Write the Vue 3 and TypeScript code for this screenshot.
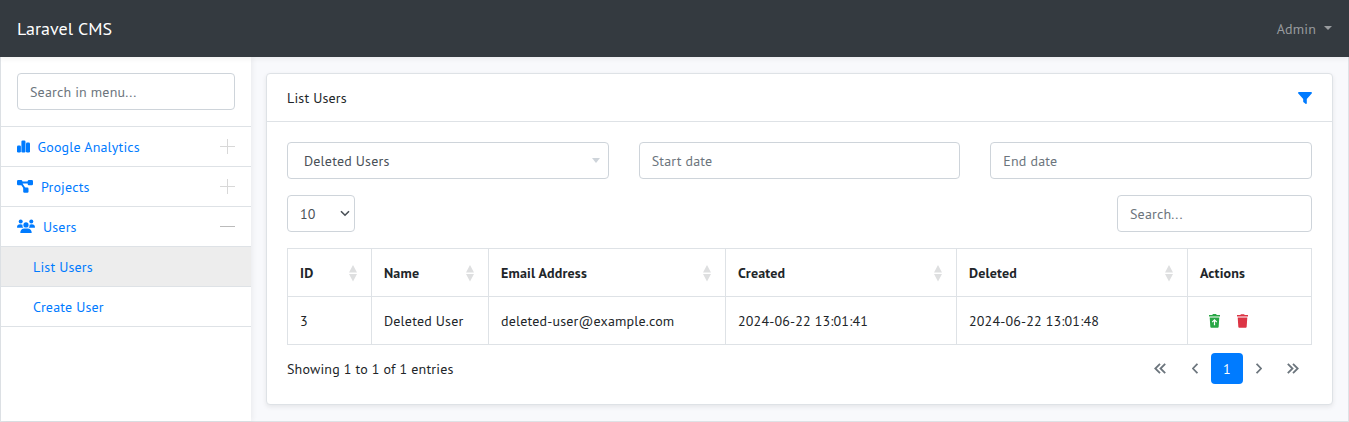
<script setup lang="ts">
import { ref } from 'vue'

interface Column {
  key: string
  label: string
  value: string
}

const columns: Column[] = [
  { key: 'id', label: 'ID', value: '3' },
  { key: 'name', label: 'Name', value: 'Deleted User' },
  { key: 'email', label: 'Email Address', value: 'deleted-user@example.com' },
  { key: 'created', label: 'Created', value: '2024-06-22 13:01:41' },
  { key: 'deleted', label: 'Deleted', value: '2024-06-22 13:01:48' },
]
const pageSize = ref('10')
</script>

<template>
  <div class="app">
    <header class="navbar">
      <span class="brand">Laravel CMS</span>
      <span class="account"><span>Admin</span><i class="caret"></i></span>
    </header>
    <div class="shell">
      <aside class="sidebar">
        <div class="menu-search">
          <input class="control" type="text" placeholder="Search in menu..." />
        </div>
        <nav>
          <a class="item analytics">
            <svg width="13" height="13" viewBox="0 0 13 13"><rect x="0" y="5.500" width="3.900" height="7" rx="1.200" /><rect x="4.400" y=".5" width="4.100" height="12" rx="1.200" /><rect x="9" y="2.500" width="4" height="10" rx="1.200" /></svg>
            <span>Google Analytics</span><i class="toggle plus"></i>
          </a>
          <a class="item">
            <svg width="16" height="13" viewBox="0 0 16 13"><rect x="0" y="0" width="5.300" height="5.200" rx="1.200" /><rect x="10.700" y="0" width="5.300" height="5.200" rx="1.200" /><rect x="6.200" y="7.600" width="5.300" height="5.200" rx="1.200" /><path d="M4 2.500h8M4 3l4 6" fill="none" stroke="#007bff" stroke-width="1.900" /></svg>
            <span>Projects</span><i class="toggle plus"></i>
          </a>
          <a class="item">
            <svg width="18" height="15" viewBox="0 0 18 15"><circle cx="3.700" cy="2.500" r="2" /><circle cx="14.300" cy="2.500" r="2" /><circle cx="9" cy="5.900" r="2.600" /><path d="M0 8.400C0 6 1.200 5.200 3.300 5.200c1 0 1.700.2 2.200.5-.2 1.600.2 2.500 1 3.100H.4zM18 8.400c0-2.400-1.200-3.200-3.300-3.200-1 0-1.700.2-2.200.5.2 1.600-.2 2.500-1 3.100h6.100zM3.300 14c0-3 1.500-4.600 4-4.600h3.400c2.500 0 4 1.600 4 4.600z" /></svg>
            <span>Users</span><i class="toggle"></i>
          </a>
          <a class="item sub active">List Users</a>
          <a class="item sub">Create User</a>
        </nav>
      </aside>
      <main class="content">
        <section class="card">
          <div class="card-header">
            <span>List Users</span>
            <svg class="filter" width="14" height="12" viewBox="0 0 14 12"><path d="M1 0h12c.9 0 1.300.9.7 1.600L8.800 7v4.200c0 .7-.7 1-1.300.6L5.600 10.300c-.3-.2-.4-.4-.4-.8V7L.3 1.600C-.3.9.1 0 1 0z" /></svg>
          </div>
          <div class="card-body">
            <div class="filters">
              <div class="control combo"><span>Deleted Users</span><i class="combo-arrow"></i></div>
              <input class="control" type="text" placeholder="Start date" />
              <input class="control" type="text" placeholder="End date" />
            </div>
            <div class="tools">
              <div class="control length"><span>{{ pageSize }}</span><svg width="10" height="7" viewBox="0 0 10 7"><path d="M1 1.200l4 4 4-4" fill="none" stroke="#495057" stroke-width="1.600" /></svg></div>
              <input class="control table-search" type="text" placeholder="Search..." />
            </div>
            <table>
              <colgroup><col class="w-id" /><col class="w-name" /><col class="w-email" /><col class="w-date" /><col class="w-date" /><col class="w-actions" /></colgroup>
              <thead>
                <tr>
                  <th v-for="c in columns" :key="c.key">
                    <div class="head-cell"><span>{{ c.label }}</span><svg width="8" height="17" viewBox="0 0 8 17"><path d="M0 7.500L4 0l4 7.500zM0 9h8l-4 7.500z" fill="#dedfe0" /></svg></div>
                  </th>
                  <th>Actions</th>
                </tr>
              </thead>
              <tbody>
                <tr>
                  <td v-for="c in columns" :key="c.key">{{ c.value }}</td>
                  <td>
                    <div class="actions">
                      <svg width="11" height="14" viewBox="0 0 11 14"><path d="M0 1h3.200L4 0h3l.8 1H11v1.600H0zM.7 3.500h9.600L9.700 12.500c0 .8-.5 1.300-1.300 1.300H2.600c-.8 0-1.300-.5-1.300-1.300z" fill="#28a745" /><path d="M5.500 11.300V6.200M3.200 8.200l2.300-2.300 2.300 2.300" stroke="#fff" stroke-width="1.200" fill="none" /></svg>
                      <svg width="11" height="14" viewBox="0 0 11 14"><path d="M0 1h3.200L4 .3h3l.8.7H11v1.600H0zM.7 3.500h9.600L9.700 12.500c0 .8-.5 1.300-1.300 1.300H2.600c-.8 0-1.300-.5-1.300-1.300z" fill="#dc3545" /></svg>
                    </div>
                  </td>
                </tr>
              </tbody>
            </table>
            <div class="table-footer">
              <span>Showing 1 to 1 of 1 entries</span>
              <div class="pager">
                <a class="double"><svg width="12" height="11" viewBox="0 0 12 11"><path d="M6 .8L1.300 5.500 6 10.200M11.200.8L6.500 5.500l4.700 4.700" /></svg></a>
                <a><svg width="6" height="11" viewBox="0 0 6 11"><path d="M5.400.8L.9 5.500l4.500 4.700" /></svg></a>
                <a class="current">1</a>
                <a class="next"><svg width="6" height="11" viewBox="0 0 6 11"><path d="M.6.8l4.500 4.700L.6 10.200" /></svg></a>
                <a class="double"><svg width="12" height="11" viewBox="0 0 12 11"><path d="M.8.8l4.700 4.700L.8 10.200M6 .8l4.700 4.700L6 10.200" /></svg></a>
              </div>
            </div>
          </div>
        </section>
      </main>
    </div>
  </div>
</template>

<style>
body { margin: 0; overflow: hidden; }
</style>

<style scoped>
* { box-sizing: border-box; }
.app {
  height: 422px;
  display: flex;
  flex-direction: column;
  font: 14px/22px "PT Sans", "Noto Sans", "Open Sans", sans-serif;
  letter-spacing: 0.17px;
  color: #212529;
  background: #f8f9fc;
}
.navbar {
  flex: 0 0 57px;
  padding: 0 17px;
  display: flex;
  align-items: center;
  justify-content: space-between;
  background: #343a40;
  color: #fff;
  box-shadow: 0 2px 5px rgba(0, 0, 0, .06);
  z-index: 1;
}
.brand { font-size: 18px; letter-spacing: 0.04px; }
.account { display: flex; align-items: center; gap: 8px; color: #999c9f; }
.caret { border: 4px solid transparent; border-top-color: #999c9f; border-bottom: 0; margin-top: -2px; }
.shell {
  flex: 1;
  display: flex;
  border: 1px solid #dee2e6;
  border-top: 0;
}
.sidebar { flex: 0 0 250px; background: #fff; box-shadow: 2px 0 5px rgba(0, 0, 0, .05); }
.menu-search { padding: 16px; border-bottom: 1px solid #dee2e6; height: 70px; }
.control {
  display: block;
  width: 100%;
  height: 37px;
  padding: 0 12px;
  border: 1px solid #ced4da;
  border-radius: 4px;
  background: #fff;
  color: #495057;
  font: inherit;
  letter-spacing: inherit;
}
.control::placeholder { color: #6c757d; opacity: 1; }
.item {
  height: 40px;
  padding: 0 16px;
  display: flex;
  align-items: center;
  gap: 8px;
  color: #007bff;
  fill: #007bff;
  border-bottom: 1px solid #dee2e6;
}
.item.analytics { gap: 7.5px; }
.item.sub { padding-left: 32px; }
.item.active { background: #ededed; }
.toggle {
  width: 15px;
  height: 15px;
  margin-left: auto;
  background: linear-gradient(#bbb, #bbb) 0 7px / 15px 1px no-repeat;
}
.toggle.plus {
  background: linear-gradient(#d8d8d8, #d8d8d8) 0 7px / 15px 1px no-repeat, linear-gradient(#d8d8d8, #d8d8d8) 7px 0 / 1px 15px no-repeat;
}
.content { flex: 1; padding: 16px 15px; }
.card {
  height: 332px;
  border: 1px solid #dee2e6;
  border-radius: 4px;
  background: #fff;
  box-shadow: 0 2px 5px rgba(0, 0, 0, .08);
}
.card-header {
  height: 48px;
  padding: 1px 20px 0;
  display: flex;
  align-items: center;
  justify-content: space-between;
  border-bottom: 1px solid #dee2e6;
}
.filter { fill: #007bff; }
.card-body { padding: 20px; }
.filters { display: grid; grid-template-columns: repeat(3, 1fr); gap: 30px; }
.combo, .length { display: flex; align-items: center; justify-content: space-between; }
.combo { padding: 0 8px 0 16px; }
.combo-arrow { border: 4px solid transparent; border-top: 5px solid #ced4da; border-bottom: 0; }
.tools { display: flex; justify-content: space-between; margin: 16px 0; }
.length { width: 68px; padding-right: 4px; }
.table-search { width: 195px; }
table { width: 1025px; table-layout: fixed; border-collapse: collapse; }
.w-id { width: 84px; }
.w-name { width: 117px; }
.w-email { width: 237px; }
.w-date { width: 231px; }
.w-actions { width: 124px; }
th, td { height: 48px; padding: 0 12px; border: 1px solid #dee2e6; text-align: left; white-space: nowrap; }
.head-cell { display: flex; align-items: center; justify-content: space-between; }
.head-cell svg { margin: 1px 2px 0 0; }
.actions { display: flex; gap: 17px; padding-left: 9px; }
.table-footer { display: flex; justify-content: space-between; margin-top: 8px; height: 31px; align-items: center; }
.pager { display: flex; }
.pager a { width: 32px; height: 31px; display: flex; align-items: center; justify-content: center; border-radius: 4px; }
.pager .double { width: 37px; padding-right: 1px; }
.pager .next { padding-right: 1px; }
.pager .current { background: #007bff; color: #fff; }
.pager path { fill: none; stroke: #6c757d; stroke-width: 1.800; }
</style>
